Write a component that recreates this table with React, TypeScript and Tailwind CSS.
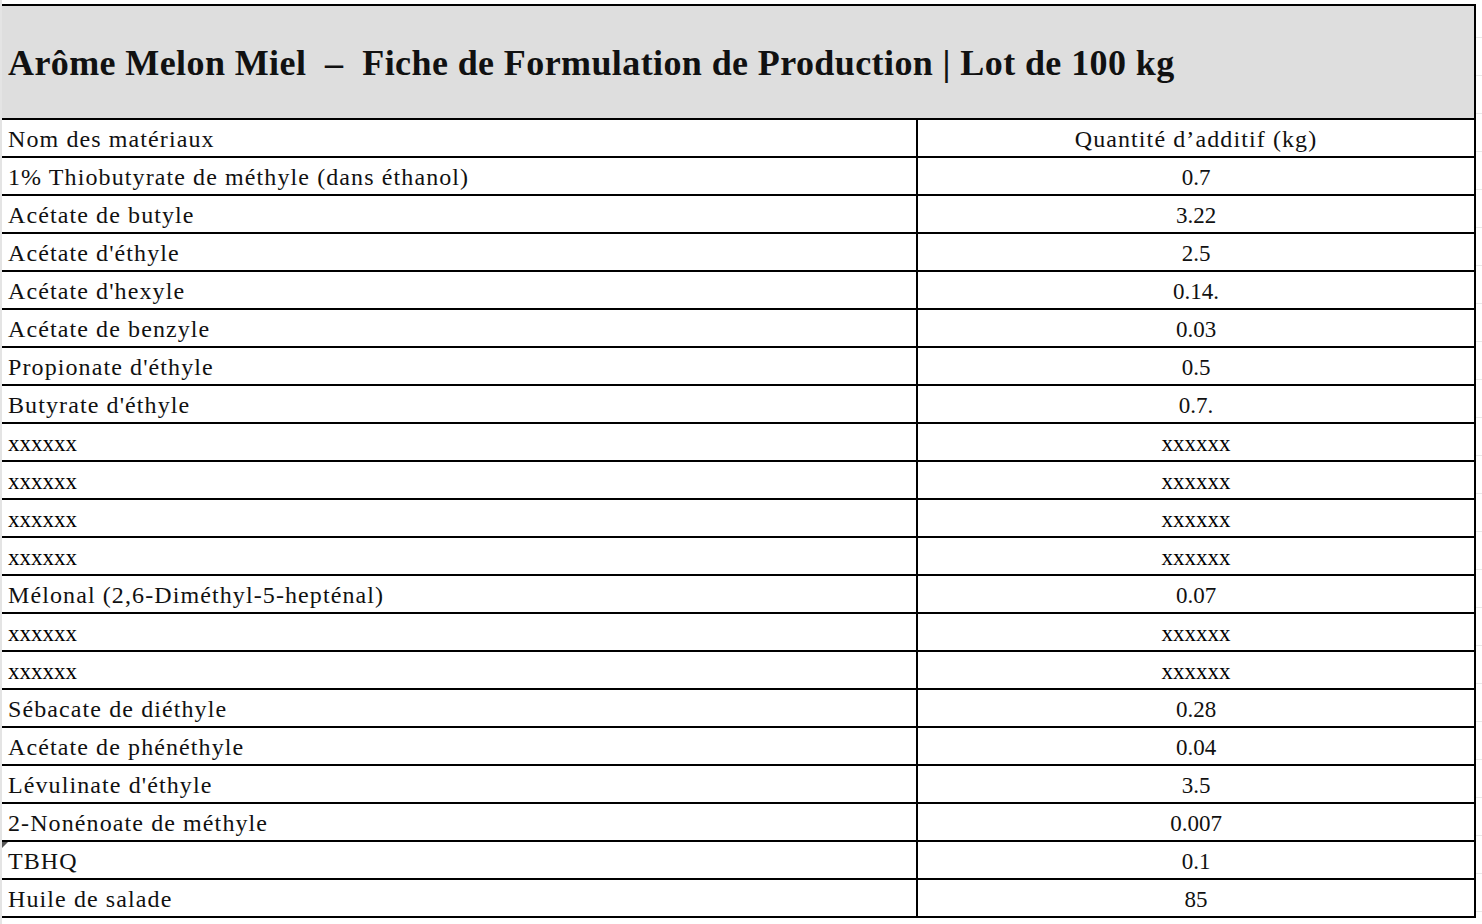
const rows: [string, string][] = [
  ["1% Thiobutyrate de méthyle (dans éthanol)", "0.7"],
  ["Acétate de butyle", "3.22"],
  ["Acétate d'éthyle", "2.5"],
  ["Acétate d'hexyle", "0.14."],
  ["Acétate de benzyle", "0.03"],
  ["Propionate d'éthyle", "0.5"],
  ["Butyrate d'éthyle", "0.7."],
  ["xxxxxx", "xxxxxx"],
  ["xxxxxx", "xxxxxx"],
  ["xxxxxx", "xxxxxx"],
  ["xxxxxx", "xxxxxx"],
  ["Mélonal (2,6-Diméthyl-5-hepténal)", "0.07"],
  ["xxxxxx", "xxxxxx"],
  ["xxxxxx", "xxxxxx"],
  ["Sébacate de diéthyle", "0.28"],
  ["Acétate de phénéthyle", "0.04"],
  ["Lévulinate d'éthyle", "3.5"],
  ["2-Nonénoate de méthyle", "0.007"],
  ["TBHQ", "0.1"],
  ["Huile de salade", "85"],
];

// kind: label = wide book-style text, num = plain number, mask = placeholder
function Cell({ text, kind, center, note }: { text: string; kind: "label" | "num" | "mask"; center?: boolean; note?: boolean }) {
  const cls =
    kind === "mask"
      ? "text-[23px] text-black leading-none pb-[5px]"
      : kind === "num"
      ? "text-[23px] text-[#111] leading-none pb-[5px]"
      : "text-[24px] tracking-[1.1px] text-[#111] leading-none pb-[5px]";
  return (
    <div className={`relative h-[36px] flex items-end px-[6px] ${center ? "justify-center" : ""}`}>
      {note && (
        <div className="absolute left-0 top-0 w-0 h-0 border-t-[6px] border-r-[6px] border-t-[#555] border-r-transparent" />
      )}
      <span className={cls}>{text}</span>
    </div>
  );
}

const kindOf = (t: string, isQty: boolean): "label" | "num" | "mask" =>
  t === "xxxxxx" ? "mask" : isQty ? "num" : "label";

export default function App() {
  return (
    <div className="w-[1482px] h-[924px] bg-white flex overflow-hidden font-['Liberation_Serif',serif]">
      <div className="w-[2px] bg-[#e4e4e4] shrink-0" />
      <div className="flex flex-col">
        <div className="h-[4px]" />
        <div className="w-[1474px] border-t-2 border-r-2 border-black">
          <div className="h-[112px] bg-[#dedede] flex items-center pl-[6px] pt-[2px]">
            <h1 className="text-[36px] font-bold text-[#111] tracking-[0.4px] leading-none">
              Arôme Melon Miel&nbsp; –&nbsp; Fiche de Formulation de Production | Lot de 100 kg
            </h1>
          </div>
          <div className="border-t-2 border-black">
            <div className="grid grid-cols-[916px_1fr] border-b-2 border-black">
              <div className="border-r-2 border-black">
                <Cell text="Nom des matériaux" kind="label" />
              </div>
              <Cell text="Quantité d’additif (kg)" kind="label" center />
            </div>
            {rows.map(([name, qty], i) => (
              <div key={i} className="grid grid-cols-[916px_1fr] border-b-2 border-black">
                <div className="border-r-2 border-black">
                  <Cell text={name} kind={kindOf(name, false)} note={name === "TBHQ"} />
                </div>
                <Cell text={qty} kind={kindOf(qty, true)} center />
              </div>
            ))}
          </div>
        </div>
      </div>
      <div className="flex-1 flex flex-col">
        {Array.from({ length: 24 }).map((_, i) => (
          <div key={i} className="h-[38px] border-b border-[#e8e8e8] shrink-0" />
        ))}
      </div>
    </div>
  );
}
